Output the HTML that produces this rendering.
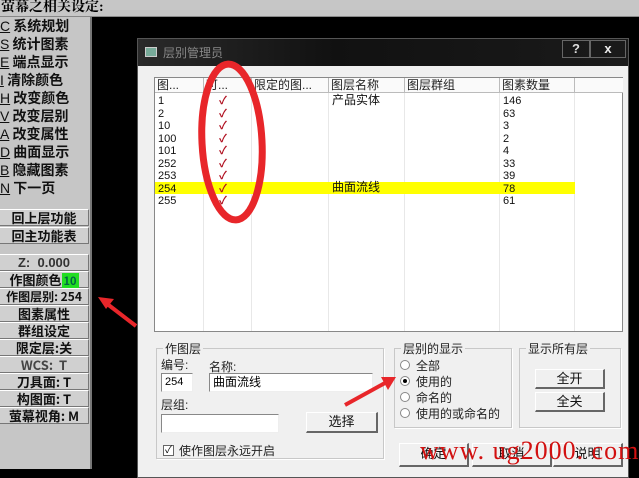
<!DOCTYPE html>
<html><head><meta charset="utf-8"><style>
*{box-sizing:border-box;margin:0;padding:0}
body{width:639px;height:469px;overflow:hidden;background:#000;position:relative;font-family:"Liberation Sans","Noto Sans CJK SC",sans-serif}
.a{position:absolute}
.top{left:0;top:0;width:639px;height:17px;background:#c6c6c6;border-bottom:1px solid #888;font:bold 14px "Liberation Serif","Noto Serif CJK SC",serif;padding-left:1px;line-height:16px;color:#000}
.left{left:0;top:17px;width:92px;height:452px;background:#c6c6c6;border-right:2px solid #777}
.mi{position:absolute;left:0;font:bold 14px "Noto Sans CJK SC",sans-serif;line-height:16px;color:#111;white-space:nowrap}
.mi u{font-family:"Liberation Sans",sans-serif;font-weight:normal}
.bt{position:absolute;left:0;width:89px;height:17px;background:#d0d0d0;border-top:1px solid #fff;border-bottom:1px solid #777;border-right:1px solid #777;font:bold 13px "Noto Sans CJK SC",sans-serif;line-height:15px;text-align:center;color:#111;white-space:nowrap}
.dlg{left:137px;top:38px;width:492px;height:440px;background:#f0f0f0;border:1px solid #555}
.tb{left:0;top:0;width:490px;height:27px;background:linear-gradient(90deg,#2a2a2a,#111 40%,#1a1a1a);}
.lst{left:16px;top:38px;width:469px;height:255px;background:#fff;border:1px solid #888}
.hd{position:absolute;top:0;height:15px;border-right:1px solid #bbb;border-bottom:1px solid #bbb;font-size:12px;line-height:14px;padding-left:2px;color:#222;background:#fafafa}
.r{position:absolute;font-size:11px;line-height:12.5px;color:#111}
.cn{font-family:"Noto Sans CJK SC",sans-serif;font-size:12px}
.vl{position:absolute;top:15px;width:1px;height:238px;background:#e8e8e8}
.gb{position:absolute;border:1px solid #c8c8c8;box-shadow:1px 1px 0 #fff}
.gl{position:absolute;top:-9px;left:6px;background:#f0f0f0;font-size:12px;padding:0 2px;color:#222}
.lb{position:absolute;font-size:12px;color:#222;white-space:nowrap}
.in{position:absolute;background:#fff;border-top:1px solid #888;border-left:1px solid #888;border-bottom:1px solid #eee;border-right:1px solid #eee;font-size:12px;padding-left:3px;line-height:17px}
.pb{position:absolute;background:#f0f0f0;border:1px solid #fff;border-right:2px solid #666;border-bottom:2px solid #666;font-size:13px;text-align:center;color:#111}
.rd{position:absolute;width:10px;height:10px;border-radius:50%;border:1px solid #888;background:#fff}
</style></head><body>
<div class="a top">萤幕之相关设定:</div>
<div class="a left">
<div class="mi" style="top:1px"><u>C</u> 系统规划</div>
<div class="mi" style="top:19px"><u>S</u> 统计图素</div>
<div class="mi" style="top:37px"><u>E</u> 端点显示</div>
<div class="mi" style="top:55px"><u>I</u> 清除颜色</div>
<div class="mi" style="top:73px"><u>H</u> 改变颜色</div>
<div class="mi" style="top:91px"><u>V</u> 改变层别</div>
<div class="mi" style="top:109px"><u>A</u> 改变属性</div>
<div class="mi" style="top:127px"><u>D</u> 曲面显示</div>
<div class="mi" style="top:145px"><u>B</u> 隐藏图素</div>
<div class="mi" style="top:163px"><u>N</u> 下一页</div>
<div class="bt" style="top:192px">回上层功能</div>
<div class="bt" style="top:210px">回主功能表</div>
<div class="bt" style="top:237px;font-family:'Liberation Sans',sans-serif;color:#333">Z:&nbsp; 0.000</div>
<div class="bt" style="top:254px">作图颜色<span style="background:#22dd22;color:#064;font-size:11px;padding:0 2px">10</span></div>
<div class="bt" style="top:271px;font-size:12px">作图层别: 254</div>
<div class="bt" style="top:288px">图素属性</div>
<div class="bt" style="top:305px">群组设定</div>
<div class="bt" style="top:322px">限定层:关</div>
<div class="bt" style="top:339px;color:#444">WCS:&nbsp; T</div>
<div class="bt" style="top:356px">刀具面: T</div>
<div class="bt" style="top:373px">构图面: T</div>
<div class="bt" style="top:390px">萤幕视角: M</div>
</div>
<div class="a dlg">
<div class="a tb">
<div class="a" style="left:7px;top:8px;width:12px;height:10px;background:#7a9;border:1px solid #ccc"></div>
<div class="a" style="left:25px;top:5px;font-size:12px;color:#888">层别管理员</div>
<div class="a" style="left:424px;top:1px;width:28px;height:18px;border:1px solid #666;color:#ddd;font-weight:bold;font-size:13px;text-align:center;line-height:16px">?</div>
<div class="a" style="left:452px;top:1px;width:36px;height:18px;border:1px solid #666;color:#eee;font-weight:bold;font-size:13px;text-align:center;line-height:16px">x</div>
</div>
<div class="a lst">
<div class="hd" style="left:0;width:49px">图...</div>
<div class="hd" style="left:49px;width:48px">可...</div>
<div class="hd" style="left:97px;width:77px">限定的图...</div>
<div class="hd" style="left:174px;width:76px">图层名称</div>
<div class="hd" style="left:250px;width:95px">图层群组</div>
<div class="hd" style="left:345px;width:75px">图素数量</div>
<div class="hd" style="left:420px;width:48px;border-right:none"></div>
<div class="vl" style="left:48px"></div><div class="vl" style="left:96px"></div><div class="vl" style="left:173px"></div><div class="vl" style="left:249px"></div><div class="vl" style="left:344px"></div><div class="vl" style="left:419px"></div>
<div class="a" style="left:0;top:104px;width:420px;height:12px;background:#ff0"></div>
<div class="r" style="left:3px;top:17px">1<br>2<br>10<br>100<br>101<br>252<br>253<br>254<br>255</div>
<div class="r" style="left:64px;top:17px;color:#b01020;font-weight:bold">✓<br>✓<br>✓<br>✓<br>✓<br>✓<br>✓<br>✓<br>✓</div>
<div class="r cn" style="left:177px;top:16px">产品实体</div>
<div class="r cn" style="left:177px;top:103px">曲面流线</div>
<div class="r" style="left:348px;top:17px">146<br>63<br>3<br>2<br>4<br>33<br>39<br>78<br>61</div>
</div>
<div class="gb" style="left:18px;top:309px;width:228px;height:111px"><div class="gl">作图层</div></div>
<div class="lb" style="left:23px;top:317px">编号:</div>
<div class="lb" style="left:71px;top:319px">名称:</div>
<div class="in" style="left:23px;top:334px;width:32px;height:19px;font-size:11px">254</div>
<div class="in" style="left:71px;top:334px;width:164px;height:19px">曲面流线</div>
<div class="lb" style="left:23px;top:357px">层组:</div>
<div class="in" style="left:23px;top:375px;width:118px;height:19px"></div>
<div class="pb" style="left:168px;top:373px;width:72px;height:21px;line-height:18px">选择</div>
<div class="a" style="left:25px;top:406px;width:11px;height:11px;border:1px solid #666;background:#fff;font-size:10px;line-height:9px;text-align:center">✓</div>
<div class="lb" style="left:41px;top:403px">使作图层永远开启</div>
<div class="gb" style="left:256px;top:309px;width:118px;height:80px"><div class="gl">层别的显示</div></div>
<div class="rd" style="left:262px;top:321px"></div><div class="lb" style="left:278px;top:318px">全部</div>
<div class="rd" style="left:262px;top:337px"><div style="margin:2px;width:4px;height:4px;border-radius:50%;background:#000"></div></div><div class="lb" style="left:278px;top:334px">使用的</div>
<div class="rd" style="left:262px;top:353px"></div><div class="lb" style="left:278px;top:350px">命名的</div>
<div class="rd" style="left:262px;top:369px"></div><div class="lb" style="left:278px;top:366px">使用的或命名的</div>
<div class="gb" style="left:381px;top:309px;width:102px;height:80px"><div class="gl">显示所有层</div></div>
<div class="pb" style="left:397px;top:330px;width:70px;height:20px;line-height:17px">全开</div>
<div class="pb" style="left:397px;top:353px;width:70px;height:20px;line-height:17px">全关</div>
<div class="pb" style="left:261px;top:404px;width:70px;height:24px;line-height:20px">确定</div>
<div class="pb" style="left:334px;top:404px;width:80px;height:24px;line-height:20px">取消</div>
<div class="pb" style="left:415px;top:404px;width:70px;height:24px;line-height:20px">说明</div>
</div>
<div class="a" style="left:420px;top:436px;font:26px 'Liberation Serif',serif;color:#d21010;white-space:nowrap;letter-spacing:1px">www. ug2000. com</div>
<svg class="a" style="left:0;top:0" width="639" height="469">
<ellipse cx="232" cy="142" rx="30" ry="78" fill="none" stroke="#e8262a" stroke-width="7" transform="rotate(-3 232 142)"/>
<line x1="136" y1="326" x2="106" y2="303" stroke="#e8262a" stroke-width="4"/>
<polygon points="98,297 114,299 106,309" fill="#e8262a"/>
<line x1="345" y1="405" x2="385" y2="383" stroke="#e8262a" stroke-width="4"/>
<polygon points="396,377 381,377 388,390" fill="#e8262a"/>
</svg>
</body></html>
